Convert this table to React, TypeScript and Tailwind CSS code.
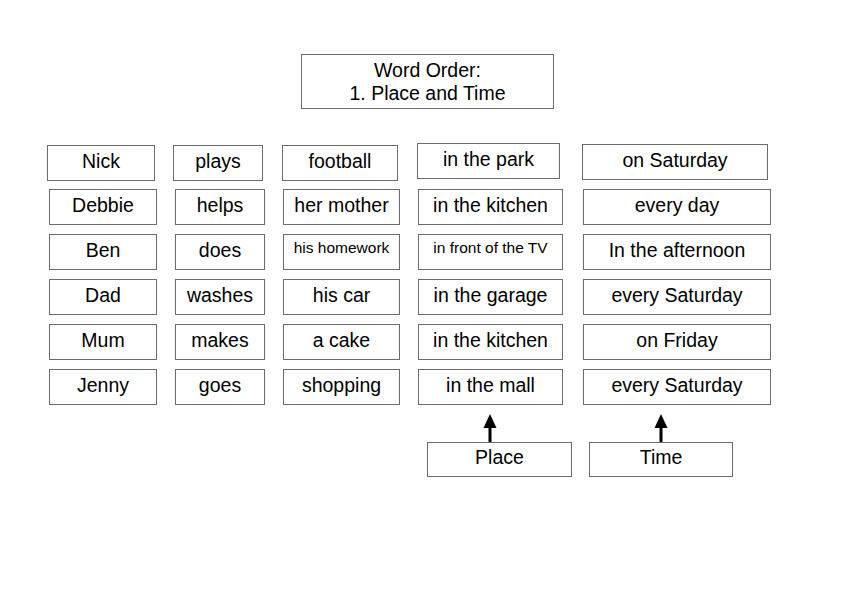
type BoxProps = {
  w: string;
  small?: boolean;
  className?: string;
  children: React.ReactNode;
};

const Box = ({ w, small, className = "", children }: BoxProps) => (
  <div
    className={`${w} h-[36px] shrink-0 border border-[#6b6b6b] pt-[4px] text-center whitespace-nowrap ${
      small ? "text-[15.5px] leading-[18px]" : "text-[19.5px] leading-[22px]"
    } ${className}`}
  >
    {children}
  </div>
);

const rows: { text: string; small?: boolean }[][] = [
  [{ text: "Debbie" }, { text: "helps" }, { text: "her mother" }, { text: "in the kitchen" }, { text: "every day" }],
  [{ text: "Ben" }, { text: "does" }, { text: "his homework", small: true }, { text: "in front of the TV", small: true }, { text: "In the afternoon" }],
  [{ text: "Dad" }, { text: "washes" }, { text: "his car" }, { text: "in the garage" }, { text: "every Saturday" }],
  [{ text: "Mum" }, { text: "makes" }, { text: "a cake" }, { text: "in the kitchen" }, { text: "on Friday" }],
  [{ text: "Jenny" }, { text: "goes" }, { text: "shopping" }, { text: "in the mall" }, { text: "every Saturday" }],
];

// column widths for the lower five rows
const colW = ["w-[108px]", "w-[90px]", "w-[117px]", "w-[145px]", "w-[188px]"];

const Arrow = ({ className = "" }: { className?: string }) => (
  <svg width="14" height="28" viewBox="0 0 14 28" className={className}>
    <polygon points="7,0 13.5,14 0.5,14" fill="#000" />
    <rect x="5.5" y="13" width="3" height="15" fill="#000" />
  </svg>
);

export default function App() {
  return (
    <div className="w-[842px] h-[595px] bg-white text-black font-['Liberation_Sans',Arial,sans-serif] pt-[54px]">
      <div className="ml-[301px] w-[253px] h-[55px] border border-[#6b6b6b] pt-[4px] text-center text-[19.5px] leading-[23px]">
        <div>Word Order:</div>
        <div>1. Place and Time</div>
      </div>

      <div className="mt-[34px] ml-[47px] flex items-start">
        <Box w="w-[108px]" className="mt-[2px]">Nick</Box>
        <Box w="w-[90px]" className="mt-[2px] ml-[18px]">plays</Box>
        <Box w="w-[116px]" className="mt-[2px] ml-[19px]">football</Box>
        <Box w="w-[143px]" className="ml-[19px]">in the park</Box>
        <Box w="w-[186px]" className="mt-[1px] ml-[22px]">on Saturday</Box>
      </div>

      <div className="mt-[8px] ml-[49px] flex flex-col gap-[9px]">
        {rows.map((row, r) => (
          <div key={r} className="flex gap-[18px]">
            {row.map((cell, c) => (
              <Box key={c} w={colW[c]} small={cell.small} className={c === 4 ? "ml-[2px]" : ""}>
                {cell.text}
              </Box>
            ))}
          </div>
        ))}
      </div>

      <div className="mt-[9px] flex">
        <Arrow className="ml-[483px]" />
        <Arrow className="ml-[157px]" />
      </div>

      <div className="flex">
        <div className="ml-[427px] w-[145px] h-[35px] border border-[#6b6b6b] pt-[3px] text-center text-[19.5px] leading-[22px]">
          Place
        </div>
        <div className="ml-[17px] w-[144px] h-[35px] border border-[#6b6b6b] pt-[3px] text-center text-[19.5px] leading-[22px]">
          Time
        </div>
      </div>
    </div>
  );
}
